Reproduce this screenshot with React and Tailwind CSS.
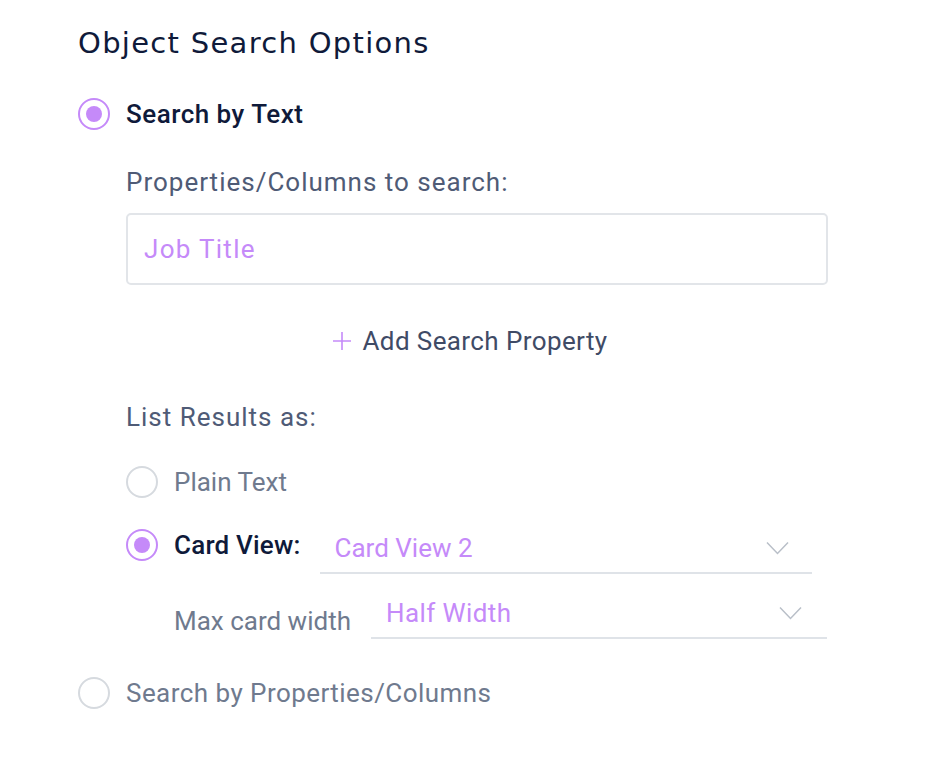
import React, { useState } from 'react';

const Radio = ({ checked }) => (
  <span
    className={`flex h-8 w-8 shrink-0 items-center justify-center rounded-full border-2 ${
      checked ? 'border-[#c58af9]' : 'border-[#d6dadf]'
    }`}
  >
    {checked && <span className="h-4 w-4 rounded-full bg-[#c58af9]" />}
  </span>
);

const Chevron = () => (
  <svg width="23" height="14" viewBox="0 0 23 14" fill="none">
    <path d="M1 1.5L11.5 12.5L22 1.5" stroke="#b9bfc8" strokeWidth="1.5" />
  </svg>
);

const Select = ({ value, className, tracking }) => (
  <div className={`flex h-[46px] items-center justify-between border-b-2 border-[#dfe3e8] pb-[4px] pl-[15px] ${className}`}>
    <span className={`text-[26px] leading-8 text-[#c58af9] ${tracking}`}>{value}</span>
    <Chevron />
  </div>
);

export default function App() {
  const [mode, setMode] = useState('text');
  const [view, setView] = useState('card');

  return (
    <div className="min-h-screen bg-white pl-[78px] pt-[24px]" style={{ fontFamily: 'Roboto, "Liberation Sans", sans-serif' }}>
      <h1
        className="text-[29px] leading-[38px] font-normal tracking-[1.3px] text-[#0f1a3a]"
        style={{ fontFamily: '"DejaVu Sans", sans-serif' }}
      >
        Object Search Options
      </h1>

      <button onClick={() => setMode('text')} className="mt-[36px] flex items-center gap-4">
        <Radio checked={mode === 'text'} />
        <span className="text-[26px] leading-8 font-medium tracking-[0.5px] text-[#0f1a3a]">Search by Text</span>
      </button>

      <div className="ml-[48px] w-[702px]">
        <div className="mt-[36px] text-[26px] leading-8 tracking-[1px] text-[#4f5b76]">Properties/Columns to search:</div>

        <div className="mt-[15px] flex h-[72px] items-center rounded-[5px] border-2 border-[#e2e5e9] px-[16px]">
          <span className="text-[26px] tracking-[1.3px] text-[#c58af9]">Job Title</span>
        </div>

        <div className="mt-[40px] flex items-center justify-center pr-[14px]">
          <button className="flex items-center gap-[10px]">
            <svg width="20" height="20" viewBox="0 0 20 20">
              <path d="M10 1V19M1 10H19" stroke="#c58af9" strokeWidth="1.6" />
            </svg>
            <span className="text-[26px] leading-8 tracking-[0.4px] text-[#3f4b66]">Add Search Property</span>
          </button>
        </div>

        <div className="mt-[44px] text-[26px] leading-8 tracking-[1px] text-[#4f5b76]">List Results as:</div>

        <button onClick={() => setView('plain')} className="mt-[33px] flex items-center gap-4">
          <Radio checked={view === 'plain'} />
          <span className="text-[26px] leading-8 text-[#6f7a8e]">Plain Text</span>
        </button>

        <div className="mt-[30px] flex items-start">
          <button onClick={() => setView('card')} className="mt-[1px] flex items-center gap-4">
            <Radio checked={view === 'card'} />
            <span className="text-[26px] leading-8 font-medium tracking-[0.2px] text-[#0f1a3a]">Card View:</span>
          </button>
          <Select value="Card View 2" className="ml-[19px] w-[492px] pr-[23px]" tracking="" />
        </div>

        <div className="mt-[19px] flex items-start pl-[48px]">
          <span className="mt-[12px] text-[26px] leading-8 text-[#6f7a8e]">Max card width</span>
          <Select value="Half Width" className="ml-[20px] w-[456px] pr-[25px]" tracking="tracking-[0.4px]" />
        </div>
      </div>

      <button onClick={() => setMode('props')} className="mt-[38px] flex items-center gap-4">
        <Radio checked={mode === 'props'} />
        <span className="text-[26px] leading-8 tracking-[0.45px] text-[#6f7a8e]">Search by Properties/Columns</span>
      </button>
    </div>
  );
}
